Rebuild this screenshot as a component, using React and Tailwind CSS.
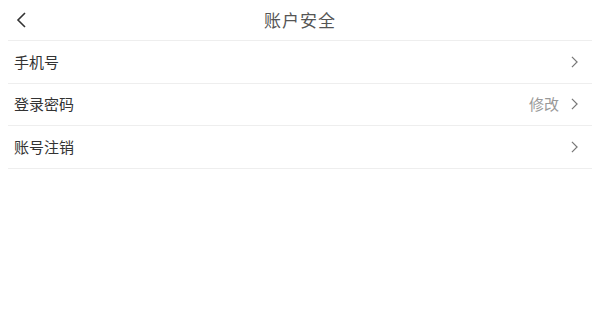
import React from 'react';

const rows = [
  { label: '手机号' },
  { label: '登录密码', value: '修改' },
  { label: '账号注销' },
];

function Chevron({ className }) {
  return (
    <svg viewBox="0 0 8 14" className={className} fill="none" stroke="currentColor" strokeWidth="1.4">
      <path d="M1 1l6 6-6 6" />
    </svg>
  );
}

export default function App() {
  return (
    <div
      className="w-[600px] h-[323px] bg-white"
      style={{ fontFamily: '"Noto Sans CJK SC", "Noto Sans", sans-serif' }}
    >
      {/* header */}
      <div className="relative h-10 flex items-center justify-center">
        <button className="absolute left-[16px] top-[12px] text-[#333]">
          <svg viewBox="0 0 10 16" className="w-[10px] h-[16px]" fill="none" stroke="currentColor" strokeWidth="1.6">
            <path d="M9 1L2 8l7 7" />
          </svg>
        </button>
        <h1 className="text-[17px] text-[#555] tracking-[1px]">账户安全</h1>
      </div>

      <div className="mx-2 border-t border-[#eeeeee]">
        {rows.map((row) => (
          <div key={row.label} className="h-[42.5px] flex items-center justify-between border-b border-[#eeeeee] pl-[6px] pr-[14px]">
            <span className="text-[15px] text-[#333]">{row.label}</span>
            <div className="flex items-center gap-[12px]">
              {row.value && <span className="text-[15px] text-[#999]">{row.value}</span>}
              <Chevron className="w-[7px] h-[12px] text-[#777]" />
            </div>
          </div>
        ))}
      </div>
    </div>
  );
}
